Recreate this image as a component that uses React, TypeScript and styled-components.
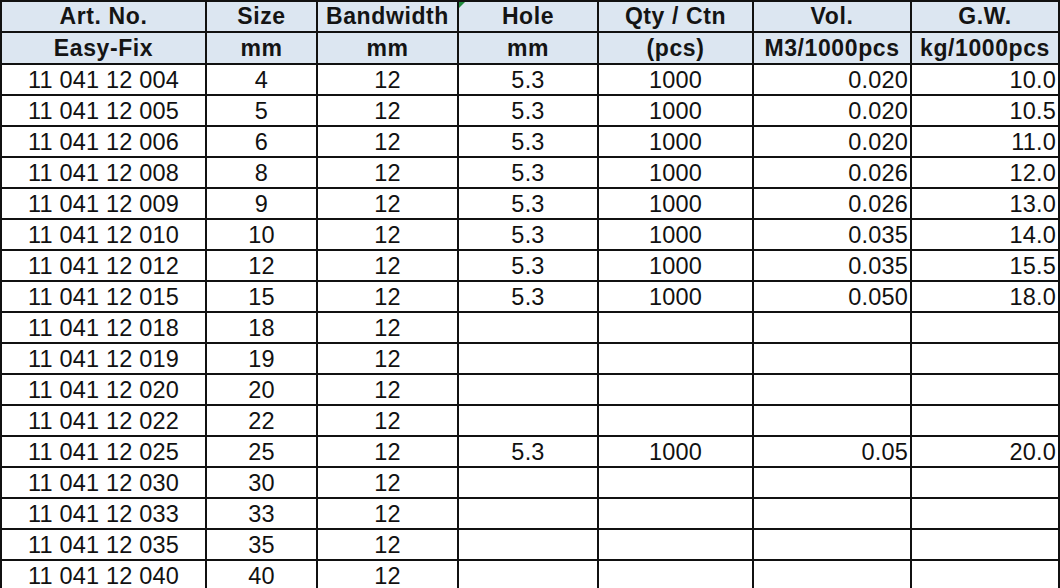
import React from 'react';
import styled, { createGlobalStyle } from 'styled-components';

type Align = 'center' | 'right';

const COLUMNS: { top: string; sub: string; align: Align }[] = [
  { top: 'Art. No.', sub: 'Easy-Fix', align: 'center' },
  { top: 'Size', sub: 'mm', align: 'center' },
  { top: 'Bandwidth', sub: 'mm', align: 'center' },
  { top: 'Hole', sub: 'mm', align: 'center' },
  { top: 'Qty / Ctn', sub: '(pcs)', align: 'center' },
  { top: 'Vol.', sub: 'M3/1000pcs', align: 'right' },
  { top: 'G.W.', sub: 'kg/1000pcs', align: 'right' },
];

const ROWS: string[][] = [
  ['11 041 12 004', '4', '12', '5.3', '1000', '0.020', '10.0'],
  ['11 041 12 005', '5', '12', '5.3', '1000', '0.020', '10.5'],
  ['11 041 12 006', '6', '12', '5.3', '1000', '0.020', '11.0'],
  ['11 041 12 008', '8', '12', '5.3', '1000', '0.026', '12.0'],
  ['11 041 12 009', '9', '12', '5.3', '1000', '0.026', '13.0'],
  ['11 041 12 010', '10', '12', '5.3', '1000', '0.035', '14.0'],
  ['11 041 12 012', '12', '12', '5.3', '1000', '0.035', '15.5'],
  ['11 041 12 015', '15', '12', '5.3', '1000', '0.050', '18.0'],
  ['11 041 12 018', '18', '12', '', '', '', ''],
  ['11 041 12 019', '19', '12', '', '', '', ''],
  ['11 041 12 020', '20', '12', '', '', '', ''],
  ['11 041 12 022', '22', '12', '', '', '', ''],
  ['11 041 12 025', '25', '12', '5.3', '1000', '0.05', '20.0'],
  ['11 041 12 030', '30', '12', '', '', '', ''],
  ['11 041 12 033', '33', '12', '', '', '', ''],
  ['11 041 12 035', '35', '12', '', '', '', ''],
  ['11 041 12 040', '40', '12', '', '', '', ''],
];

const GlobalStyle = createGlobalStyle`
  html, body {
    margin: 0;
    padding: 0;
    background: #ffffff;
  }
  body {
    font-family: "Liberation Sans", Arial, sans-serif;
  }
`;

const Sheet = styled.div`
  box-sizing: border-box;
  width: 1060px;
  height: 588px;
  display: grid;
  grid-template-columns: 205px 111px 141px 140px 155px 158px 148px;
  grid-template-rows: 31px 32px repeat(17, 1fr);
  border-top: 2px solid #111;
  border-left: 2px solid #111;
  overflow: hidden;
`;

const Cell = styled.div<{ $align: Align }>`
  box-sizing: border-box;
  position: relative;
  display: flex;
  align-items: center;
  justify-content: ${(p) => (p.$align === 'right' ? 'flex-end' : 'center')};
  padding: ${(p) => (p.$align === 'right' ? '2px 2px 0 0' : '2px 0 0 0')};
  border-right: 2px solid #111;
  border-bottom: 2px solid #111;
  font-size: 23.5px;
  letter-spacing: 0.2px;
  color: #111;
  white-space: nowrap;
`;

const HeadCell = styled(Cell)`
  justify-content: center;
  padding: 0;
  background: #dce6f1;
  font-weight: 700;
  font-size: 23px;
  letter-spacing: 0.6px;
  color: #141414;
`;

const CommentMark = styled.span`
  position: absolute;
  top: 0;
  left: 0;
  width: 0;
  height: 0;
  border-top: 6px solid #1f8a3c;
  border-right: 6px solid transparent;
`;

export default function App() {
  return (
    <>
      <GlobalStyle />
      <Sheet>
        {COLUMNS.map((col, i) => (
          <HeadCell key={'t' + i} $align="center">
            {i === 3 && <CommentMark />}
            {col.top}
          </HeadCell>
        ))}
        {COLUMNS.map((col, i) => (
          <HeadCell key={'s' + i} $align="center">
            {col.sub}
          </HeadCell>
        ))}
        {ROWS.map((row, r) =>
          row.map((value, c) => (
            <Cell key={r + '-' + c} $align={COLUMNS[c].align}>
              {value}
            </Cell>
          )),
        )}
      </Sheet>
    </>
  );
}
